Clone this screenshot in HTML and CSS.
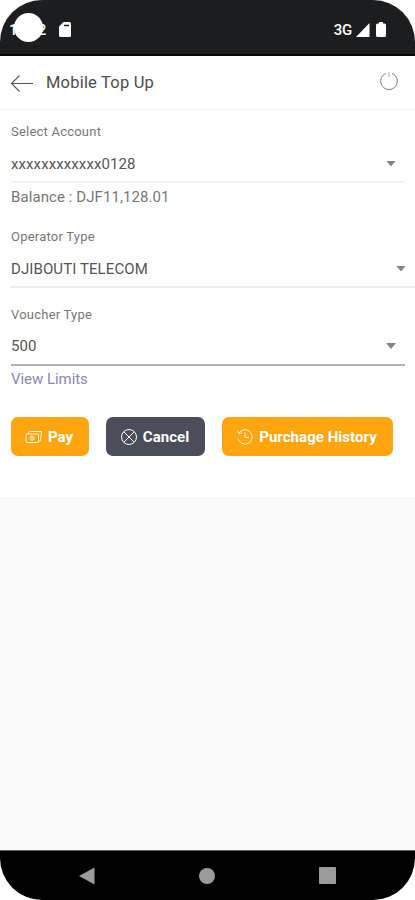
FILE: index.html
```html
<!DOCTYPE html>
<html lang="en">
<head>
<meta charset="utf-8">
<title>Mobile Top Up</title>
<link rel="stylesheet" href="styles.css">
</head>
<body>
<div class="phone">
  <header class="status">
    <span class="clock">12:22</span><i class="camera"></i>
    <svg class="sd" width="12" height="15" viewBox="0 0 12 15"><path d="M4.500 0H10.500Q12 0 12 1.500V13.500Q12 15 10.500 15H1.500Q0 15 0 13.500V4.500Z" fill="#fff"/><path d="M5 3.500H10" stroke="#1b1d1f" stroke-width="1.500"/></svg>
    <span class="network">3G</span>
    <svg class="signal" width="14" height="14" viewBox="0 0 14 14"><path d="M13.500 0V14H0Z" fill="#fff"/></svg>
    <svg class="battery" width="10" height="15" viewBox="0 0 10 15"><path d="M3 0H7V1.500H8.500Q10 1.500 10 3V13.500Q10 15 8.500 15H1.500Q0 15 0 13.500V3Q0 1.500 1.500 1.500H3Z" fill="#fff"/></svg>
  </header>
  <div class="appbar">
    <svg width="24" height="20" viewBox="0 0 24 20" fill="none" stroke="#555" stroke-width="1.100"><path d="M23 10.500H2M9.500 2.500L1.500 10.500L9.500 18.500"/></svg>
    <h1>Mobile Top Up</h1>
    <svg class="power" width="20" height="20" viewBox="0 0 20 20" fill="none" stroke="#777" stroke-width="1"><path d="M7 2.500A8.300 8.300 0 1 0 13 2.500"/><path d="M10 1V6" stroke="#aaa"/></svg>
  </div>
  <main class="form">
    <section class="field account">
      <label>Select Account</label>
      <div class="select"><span>xxxxxxxxxxxx0128</span><i class="arrow"></i></div>
      <p class="balance">Balance : DJF11,128.01</p>
    </section>
    <section class="field operator">
      <label>Operator Type</label>
      <div class="select"><span>DJIBOUTI TELECOM</span><i class="arrow"></i></div>
    </section>
    <section class="field voucher">
      <label>Voucher Type</label>
      <div class="select"><span>500</span><i class="arrow"></i></div>
      <a class="limits">View Limits</a>
    </section>
    <div class="actions">
      <button class="pay"><svg width="18" height="14" viewBox="0 0 18 14" fill="none" stroke="#fff" stroke-width=".9"><rect x="1" y="4" width="12.500" height="8.500" rx="1"/><path d="M3 4L4 1.500H16.500L15.500 10.500L13.500 12"/><circle cx="7.200" cy="8.200" r="2"/><path d="M7.200 7.200V9.200"/></svg><span>Pay</span></button>
      <button class="cancel"><svg width="18" height="18" viewBox="0 0 18 18" fill="none" stroke="#fff" stroke-width="1"><circle cx="9" cy="9" r="7.500"/><path d="M4 4L14 14M14 4L4 14"/></svg><span>Cancel</span></button>
      <button class="history"><svg width="18" height="18" viewBox="0 0 18 18" fill="none" stroke="#fff" stroke-width=".9"><path d="M3 5A7.200 7.200 0 1 1 2 10.500M1.500 2.500L2.700 5.500L6 5M9 4.500V9.500H13"/></svg><span>Purchage History</span></button>
    </div>
  </main>
  <div class="space"></div>
  <nav class="navbar">
    <svg width="16" height="18" viewBox="0 0 16 18"><path d="M15.500 .5V17.500L0 9Z" fill="#9b9b9b"/></svg>
    <svg width="16" height="16" viewBox="0 0 16 16"><circle cx="8" cy="8" r="8" fill="#9b9b9b"/></svg>
    <svg width="17" height="17" viewBox="0 0 17 17"><rect width="17" height="17" rx="1" fill="#9b9b9b"/></svg>
  </nav>
</div>
</body>
</html>
```
FILE: styles.css
```css
* { box-sizing: border-box; }
body { margin: 0; background: #fff; font-family: Roboto, sans-serif; }
.phone { width: 415px; height: 900px; display: flex; flex-direction: column; overflow: hidden; background: #fafafa; border-radius: 42px; }
.status { height: 56px; background: #1b1d1f; border-bottom: 2px solid #08090a; display: flex; align-items: center; padding: 5px 29px 0 9px; position: relative; color: #fff; }
.clock { width: 50px; font-size: 15px; font-weight: 500; letter-spacing: -.2px; }
.camera { position: absolute; left: 14px; top: 13px; width: 29px; height: 29px; border-radius: 50%; background: #fff; }
.network { margin-left: auto; font-size: 15px; font-weight: 500; letter-spacing: -.3px; }
.signal { margin-left: 4px; }
.battery { margin-left: 6px; }
.appbar { height: 54px; background: #fff; border-bottom: 1px solid #f3f3f3; display: flex; align-items: center; padding: 0 16px 0 10px; }
h1 { margin: 0 0 0 12px; font-size: 16.500px; font-weight: 400; letter-spacing: .2px; color: #4c4c4c; }
.power { margin: -3px 0 0 auto; }
.form { height: 387px; padding: 12px 0 0 11px; background: #fff; }
.field { display: flex; flex-direction: column; margin-right: 10px; }
.account { height: 105px; }
.operator { height: 78px; margin-right: 0; }
.voucher { height: 112px; }
label { height: 20px; font-size: 13px; line-height: 20px; letter-spacing: .22px; color: #777; }
.select { height: 41px; border-bottom: 2px solid #f3f3f3; display: flex; align-items: center; justify-content: space-between; padding: 4px 9px 0 0; font-size: 15px; letter-spacing: .1px; color: #555; }
.operator .select { border-color: #ececec; }
.voucher .select { border-color: #b2b2b2; padding-top: 3px; }
.arrow { width: 10px; height: 6px; background: #858585; clip-path: polygon(0 0, 100% 0, 50% 100%); }
.balance, .limits { margin: 4px 0 0; height: 20px; font-size: 15px; line-height: 20px; letter-spacing: .08px; color: #777; }
.limits { margin-top: 3px; letter-spacing: -.05px; color: #8b87b6; }
.actions { display: flex; gap: 17px; }
button { height: 39px; margin: 0; padding: 0 2px 0 0; border: 0; border-radius: 7px; display: flex; align-items: center; justify-content: center; gap: 5px; background: #ffa50f; color: #fff; font: 700 15px Roboto, sans-serif; letter-spacing: .05px; }
.pay { width: 78px; }
.cancel { width: 99px; background: #4b4e5a; }
.history { width: 171px; }
.space { flex: 1; }
.navbar { height: 50px; background: #000; border-top: 1px solid #666; display: flex; align-items: center; justify-content: space-between; padding: 0 79px 0 79px; }
```
